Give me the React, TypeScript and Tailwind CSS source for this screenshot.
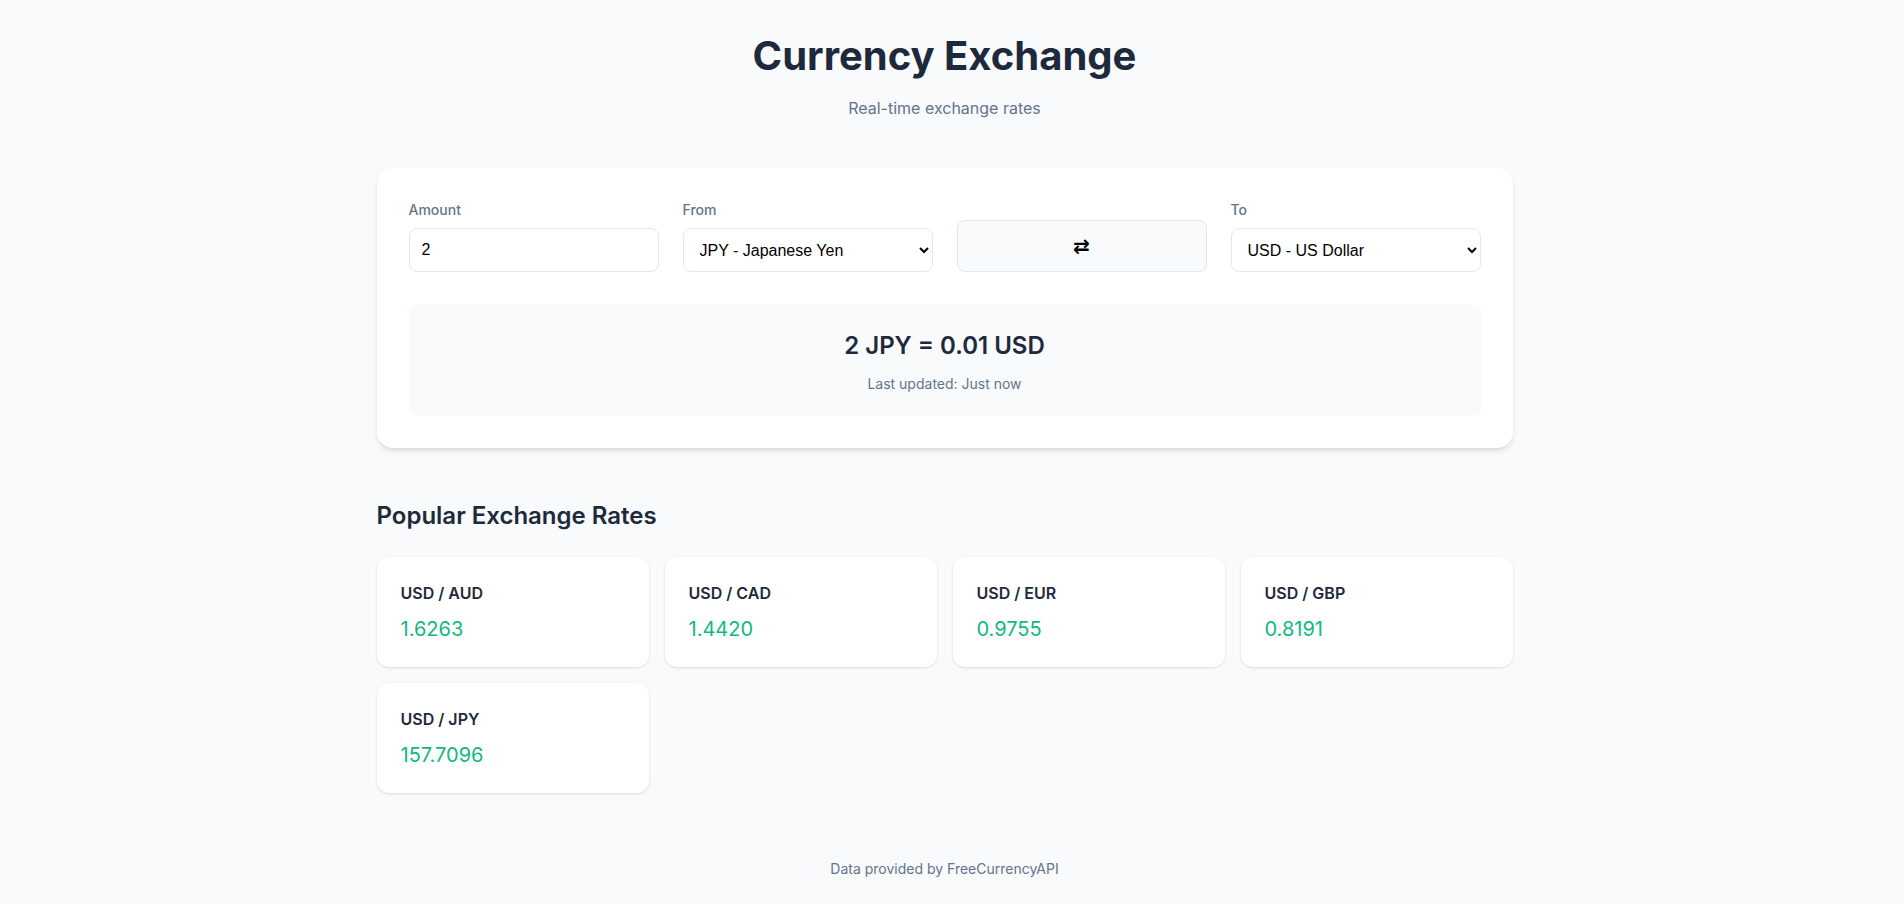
import { useState } from "react";

const currencies = [
  { code: "USD", name: "US Dollar" },
  { code: "EUR", name: "Euro" },
  { code: "GBP", name: "British Pound" },
  { code: "JPY", name: "Japanese Yen" },
  { code: "AUD", name: "Australian Dollar" },
  { code: "CAD", name: "Canadian Dollar" },
];

const popular = [
  { pair: "USD / AUD", rate: "1.6263" },
  { pair: "USD / CAD", rate: "1.4420" },
  { pair: "USD / EUR", rate: "0.9755" },
  { pair: "USD / GBP", rate: "0.8191" },
  { pair: "USD / JPY", rate: "157.7096" },
];

export default function App() {
  const [amount, setAmount] = useState("2");
  const [from, setFrom] = useState("JPY");
  const [to, setTo] = useState("USD");

  const swap = () => {
    setFrom(to);
    setTo(from);
  };

  return (
    <div className="min-h-screen bg-[#f8fafc] pr-[15px] font-['Inter',sans-serif] text-[#1e293b]">
      <div className="mx-auto max-w-[1136px] pt-8 pb-10">
        {/* Header */}
        <header className="mb-12 text-center">
          <h1 className="text-[40px] leading-[48px] font-bold text-[#1e293b]">Currency Exchange</h1>
          <p className="mt-4 text-base text-[#64748b]">Real-time exchange rates</p>
        </header>

        {/* Converter */}
        <div className="rounded-2xl bg-white p-8 shadow-md">
          <div className="grid grid-cols-4 items-end gap-6">
            <div>
              <label className="mb-2 block text-sm font-medium text-[#64748b]">Amount</label>
              <input
                type="text"
                value={amount}
                onChange={(e) => setAmount(e.target.value)}
                className="h-11 w-full rounded-lg border border-[#e2e8f0] bg-white px-3 font-['Liberation_Sans',sans-serif] text-base text-black outline-none"
              />
            </div>
            <div>
              <label className="mb-2 block text-sm font-medium text-[#64748b]">From</label>
              <select
                value={from}
                onChange={(e) => setFrom(e.target.value)}
                className="h-11 w-full rounded-lg border border-[#e2e8f0] bg-white px-3 font-['Liberation_Sans',sans-serif] text-base text-black outline-none"
              >
                {currencies.map((c) => (
                  <option key={c.code} value={c.code}>
                    {c.code} - {c.name}
                  </option>
                ))}
              </select>
            </div>
            <button
              onClick={swap}
              className="flex h-[52px] items-center justify-center rounded-lg border border-[#e2e8f0] bg-[#f8fafc] font-['DejaVu_Sans',sans-serif] text-xl font-bold text-black"
            >
              ⇄
            </button>
            <div>
              <label className="mb-2 block text-sm font-medium text-[#64748b]">To</label>
              <select
                value={to}
                onChange={(e) => setTo(e.target.value)}
                className="h-11 w-full rounded-lg border border-[#e2e8f0] bg-white px-3 font-['Liberation_Sans',sans-serif] text-base text-black outline-none"
              >
                {currencies.map((c) => (
                  <option key={c.code} value={c.code}>
                    {c.code} - {c.name}
                  </option>
                ))}
              </select>
            </div>
          </div>

          <div className="mt-8 rounded-lg bg-[#f8fafc] pt-[26px] pb-[22px] text-center">
            <h2 className="text-2xl font-semibold text-[#1e293b]">
              {amount} {from} = 0.01 {to}
            </h2>
            <p className="mt-3 text-sm text-[#64748b]">Last updated: Just now</p>
          </div>
        </div>

        {/* Popular rates */}
        <h3 className="mt-[52px] mb-[25px] text-2xl font-semibold text-[#1e293b]">Popular Exchange Rates</h3>
        <div className="grid grid-cols-4 gap-4">
          {popular.map((r) => (
            <div key={r.pair} className="rounded-xl bg-white p-6 shadow-sm">
              <div className="text-base font-semibold text-[#1e293b]">{r.pair}</div>
              <div className="mt-2.5 text-xl text-[#10b981]">{r.rate}</div>
            </div>
          ))}
        </div>

        <footer className="mt-[66px] text-center text-sm text-[#64748b]">Data provided by FreeCurrencyAPI</footer>
      </div>
    </div>
  );
}
